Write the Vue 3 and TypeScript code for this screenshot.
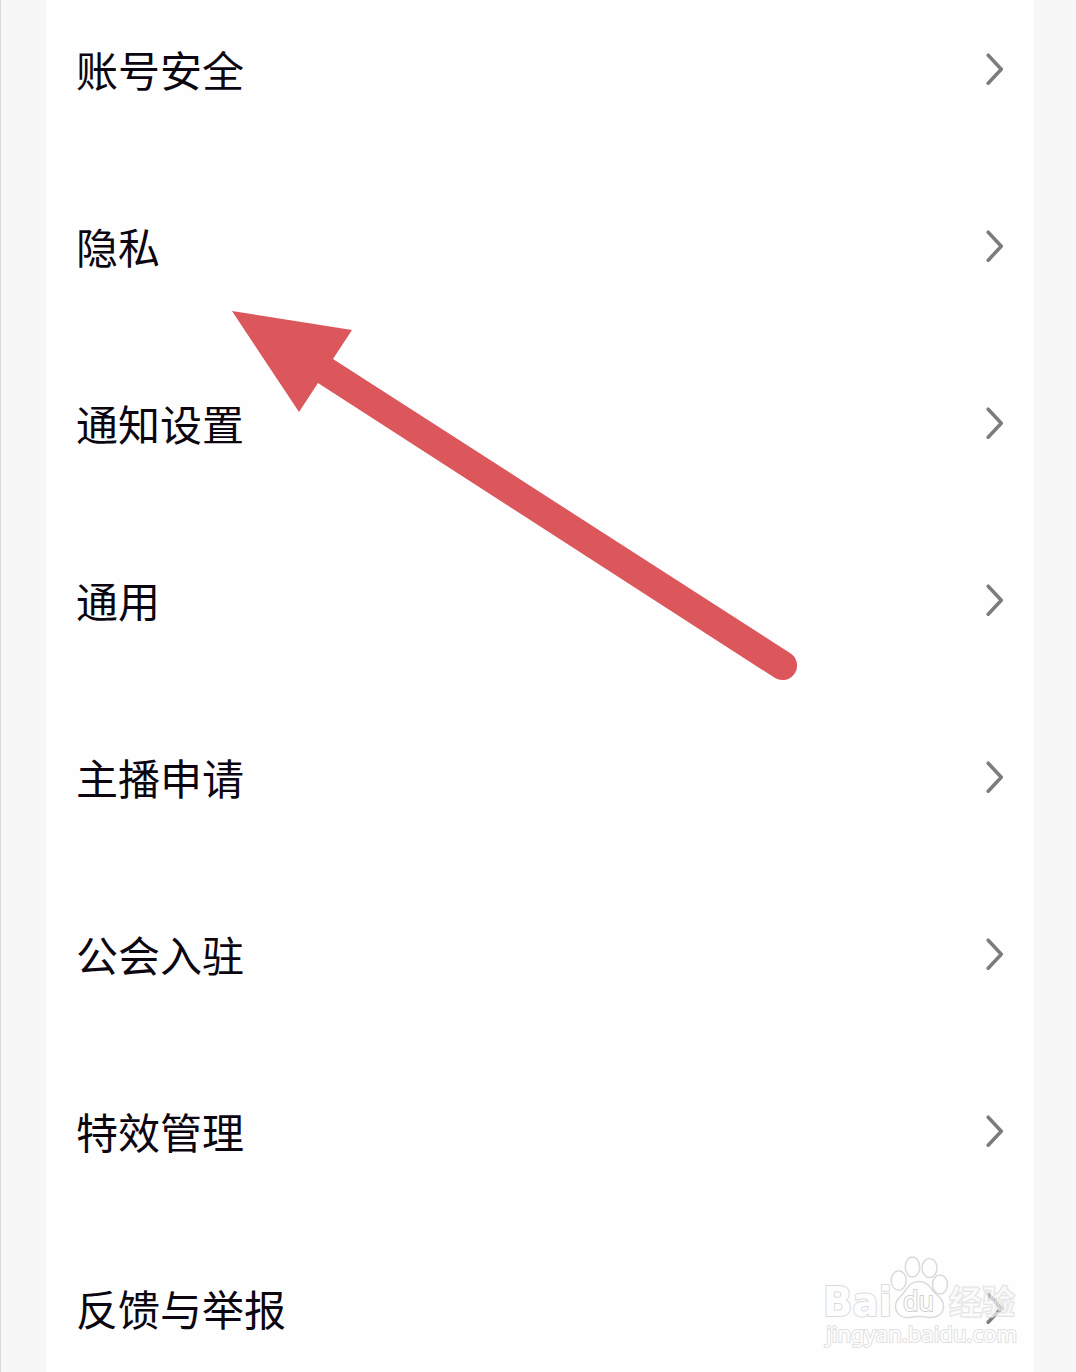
<script setup lang="ts">
const items: string[] = [
  '账号安全',
  '隐私',
  '通知设置',
  '通用',
  '主播申请',
  '公会入驻',
  '特效管理',
  '反馈与举报',
]
</script>

<template>
  <main class="page">
    <ul class="settings">
      <li v-for="item in items" :key="item" class="row">
        <span class="label">{{ item }}</span>
        <svg class="chevron" width="20" height="34" viewBox="0 0 20 34" aria-hidden="true">
          <path d="M3.200 2.200 L16.300 16.200 L3.200 30.200" />
        </svg>
      </li>
    </ul>

    <svg class="pointer" width="580" height="384" viewBox="225 304 580 384" aria-hidden="true">
      <path d="M232 311 L352 330 L333 359 L790 653 A14.3 14.3 0 0 1 775 678 L318 383 L299 412 Z" />
    </svg>

    <svg class="watermark" width="210" height="110" viewBox="815 1245 210 110">
      <g class="mark">
        <text x="823" y="1316" class="brand" textLength="69" lengthAdjust="spacingAndGlyphs">Bai</text>
        <ellipse cx="898.7" cy="1280.5" rx="7.5" ry="9.7" />
        <ellipse cx="912.5" cy="1267" rx="7.2" ry="10" />
        <ellipse cx="929.5" cy="1268" rx="7.5" ry="9.5" />
        <ellipse cx="940" cy="1284.500" rx="7.5" ry="9.5" />
        <path d="M919 1281.500 C927 1281.500 930 1287 934 1292 C939 1297 944 1300 943.500 1307 C943 1315 936 1318 929 1317.500 C922 1316 916 1316 909 1317.500 C902 1318.500 896 1314 895.500 1307 C895 1299 901 1297 905 1291 C909 1285 912 1281.500 919 1281.500 Z" />
        <text x="903" y="1311" class="du" textLength="31" lengthAdjust="spacingAndGlyphs">du</text>
        <text x="949" y="1314" class="cjk" textLength="66" lengthAdjust="spacingAndGlyphs">经验</text>
        <text x="826" y="1342" class="url" textLength="191" lengthAdjust="spacingAndGlyphs">jingyan.baidu.com</text>
      </g>
    </svg>
  </main>
</template>

<style>
body {
  margin: 0;
}
</style>

<style scoped>
.page {
  position: relative;
  box-sizing: border-box;
  width: 1076px;
  height: 1372px;
  padding: 0 42px 0 45px;
  overflow: hidden;
  background: #f7f7f7;
  border-left: 1px solid #d9d9d9;
}

.settings {
  box-sizing: border-box;
  height: 1410px;
  margin: -19px 0 0;
  padding: 0;
  list-style: none;
  background: #fefefe;
}

.row {
  display: flex;
  align-items: center;
  justify-content: space-between;
  box-sizing: border-box;
  height: 177px;
  padding: 0 29px 0 30px;
}

.label {
  padding-bottom: 1px;
  color: #0c0610;
  font-family: 'Noto Sans CJK SC', sans-serif;
  font-size: 42px;
  line-height: 60px;
}

.chevron path {
  fill: none;
  stroke: #7c7c7c;
  stroke-width: 3.5;
  stroke-linecap: round;
  stroke-linejoin: round;
}

.pointer {
  position: absolute;
  top: 304px;
  left: 224px;
  fill: #db575c;
}

.watermark {
  position: absolute;
  top: 1245px;
  left: 814px;
}

.mark {
  fill: #fefefe;
  stroke: #dadada;
  stroke-width: 1.5;
  stroke-linejoin: round;
}

.mark text {
  stroke-width: 2;
  paint-order: stroke;
}

.mark .brand {
  font: bold 41px 'DejaVu Sans', sans-serif;
}

.mark .du {
  font: 27px 'Noto Sans', sans-serif;
  stroke: #cfcfcf;
}

.mark .cjk {
  font: bold 33px 'Noto Sans CJK SC', sans-serif;
  fill-opacity: 0.5;
  stroke: #dcdcdc;
  stroke-opacity: 0.75;
}

.mark .url {
  font: 22px 'Noto Sans', sans-serif;
  stroke: #e0e0e0;
}
</style>
